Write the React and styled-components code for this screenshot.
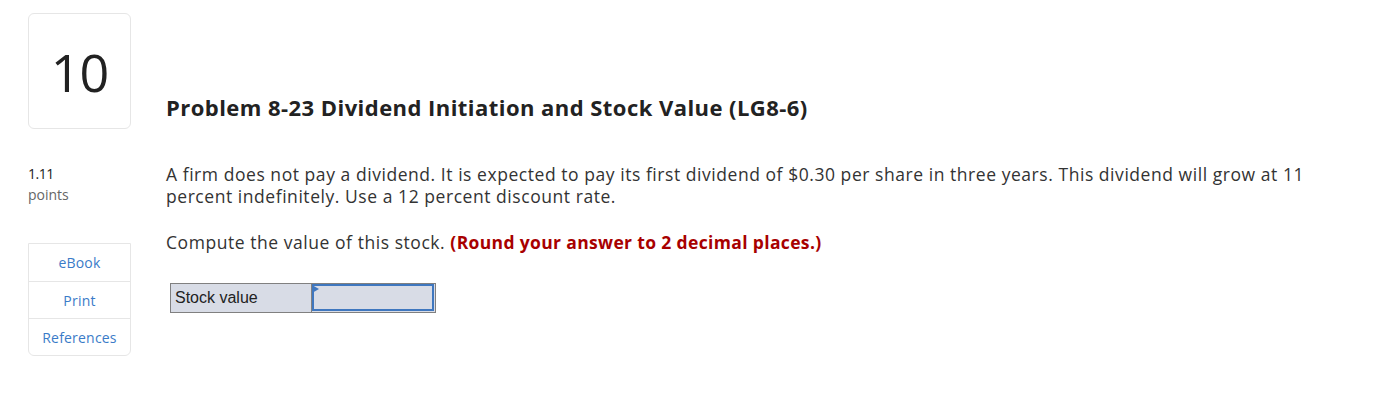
import React from 'react'
import styled, {createGlobalStyle} from 'styled-components'

const GlobalStyle = createGlobalStyle`
  body {
    margin: 0;
    background: #fff;
    font-family: "Open Sans", Lato, sans-serif;
    color: #333;
  }
`

const Page = styled.div`
  display: flex;
  padding: 13px 0 0 28px;
  gap: 35px;
`

const Sidebar = styled.div`
  width: 103px;
  display: flex;
  flex-direction: column;
`

const NumberBox = styled.div`
  height: 116px;
  box-sizing: border-box;
  border: 1px solid #e6e6e6;
  border-radius: 6px;
  display: flex;
  align-items: center;
  justify-content: center;
  font-size: 52px;
  font-weight: 400;
  color: #222;
  letter-spacing: -1px;
`

const Points = styled.div`
  margin-top: 34px;
  font-size: 14px;
  line-height: 21px;
  color: #666;
  & b {
    font-weight: 400;
    color: #222;
    letter-spacing: -0.5px;
  }
`

const LinkList = styled.div`
  margin-top: 38px;
  border: 1px solid #e6e6e6;
  border-radius: 0 0 6px 6px;
`

const LinkItem = styled.div`
  height: ${p => (p.first ? 37 : 36)}px;
  display: flex;
  align-items: center;
  justify-content: center;
  font-size: 14px;
  letter-spacing: 0.2px;
  color: #3a7bc8;
  border-top: ${p => (p.first ? 'none' : '1px solid #e6e6e6')};
`

const Main = styled.div`
  flex: 1;
  padding-right: 50px;
`

const Title = styled.h2`
  margin: 80px 0 0;
  font-size: 22px;
  line-height: 28px;
  font-weight: 700;
  letter-spacing: 0.45px;
  color: #222;
`

const Para = styled.p`
  margin: ${p => p.top}px 0 0;
  font-size: 17.5px;
  line-height: 22px;
  letter-spacing: 0.55px;
  color: #333;
`

const Hint = styled.span`
  color: #a80000;
  font-weight: 700;
  letter-spacing: 0.35px;
`

const AnswerTable = styled.div`
  margin: 30px 0 0 4px;
  display: flex;
  width: 266px;
  height: 30px;
  box-sizing: border-box;
  border: 1px solid #808080;
  background: #d8dce6;
  font-family: "Liberation Sans", Arial, sans-serif;
`

const Label = styled.div`
  width: 141px;
  box-sizing: border-box;
  border-right: 1px solid #808080;
  display: flex;
  align-items: center;
  padding-left: 4px;
  font-size: 16px;
  color: #222;
`

const InputCell = styled.div`
  position: relative;
  flex: 1;
  border: 2px solid #3f77bf;
  margin: 0 1px 1px 0;
`

const Flag = styled.div`
  position: absolute;
  top: -1px;
  left: -2px;
  width: 0;
  height: 0;
  border-top: 4px solid transparent;
  border-bottom: 4px solid transparent;
  border-left: 7px solid #3f77bf;
`

export default function App() {
  return (
    <>
      <GlobalStyle />
      <Page>
        <Sidebar>
          <NumberBox>10</NumberBox>
          <Points>
            <b>1.11</b>
            <br />
            points
          </Points>
          <LinkList>
            <LinkItem first>eBook</LinkItem>
            <LinkItem>Print</LinkItem>
            <LinkItem>References</LinkItem>
          </LinkList>
        </Sidebar>
        <Main>
          <Title>Problem 8-23 Dividend Initiation and Stock Value (LG8-6)</Title>
          <Para top={42}>
            A firm does not pay a dividend. It is expected to pay its first
            dividend of $0.30 per share in three years. This dividend will grow
            at 11 percent indefinitely. Use a 12 percent discount rate.
          </Para>
          <Para top={24}>
            Compute the value of this stock.{' '}
            <Hint>(Round your answer to 2 decimal places.)</Hint>
          </Para>
          <AnswerTable>
            <Label>Stock value</Label>
            <InputCell>
              <Flag />
            </InputCell>
          </AnswerTable>
        </Main>
      </Page>
    </>
  )
}
